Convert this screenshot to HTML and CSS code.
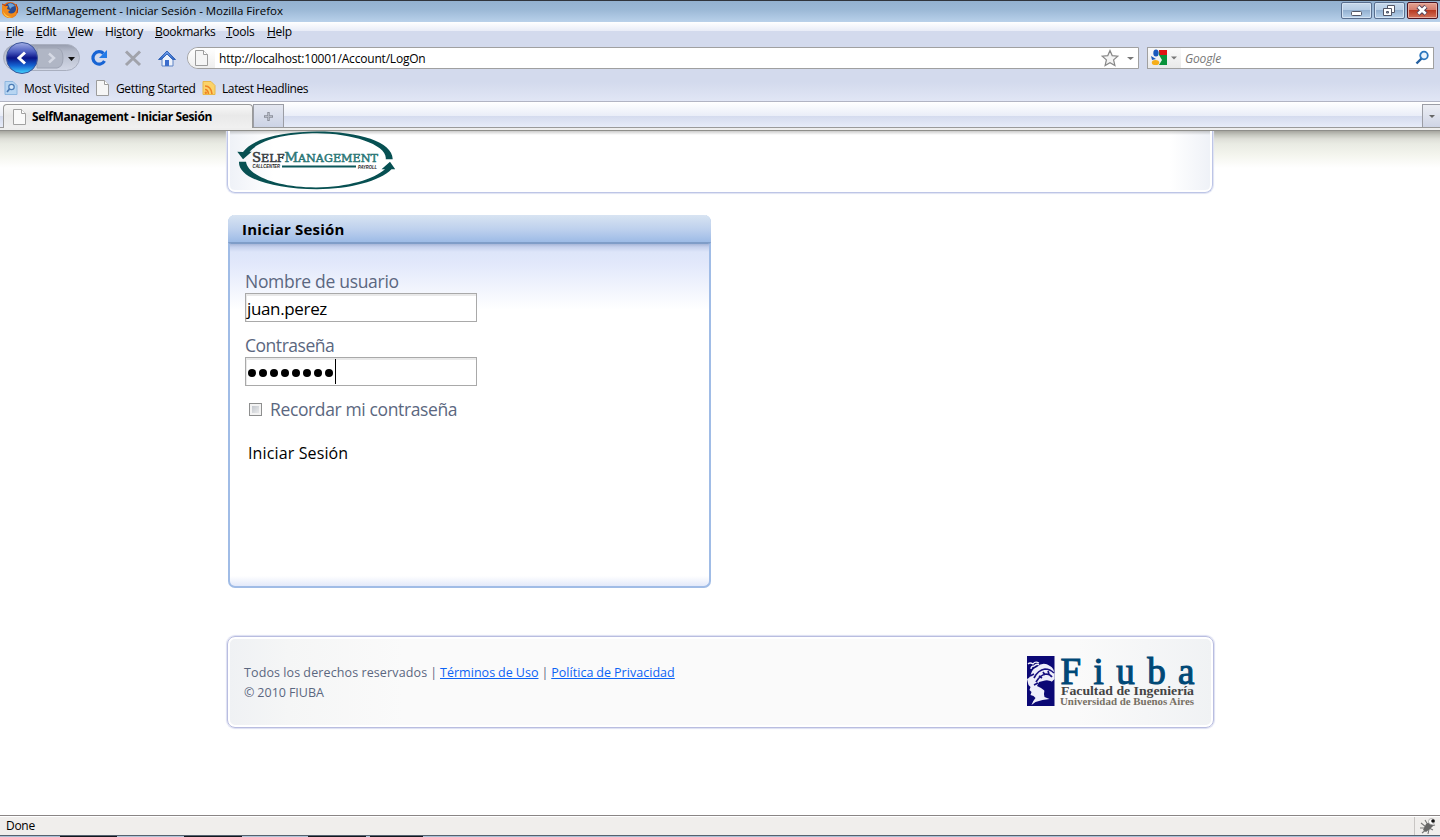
FILE: index.html
```html
<!DOCTYPE html>
<html lang="es">
<head>
<meta charset="utf-8">
<title>SelfManagement - Iniciar Sesión</title>
<link rel="stylesheet" href="styles.css">
</head>
<body>
<div class="window">
  <div class="titlebar">
    <svg class="fox" width="18" height="18" viewBox="0 0 18 18"><circle cx="9" cy="9" r="8" fill="#e56a12"/><circle cx="9.500" cy="7.500" r="5.800" fill="#2b4c93"/><path d="M7 3q4-2 7 2l-3 1-2 2z" fill="#6ba2d8"/><path d="M1 4l3 1 3 0-1 3 3 1-2 2q3 3 7 0 2-3 0-8 4 4 2 8-2 6-8 6-8-1-7-9z" fill="#ef8a1c"/><path d="M2 10q3 6 9 6-7 2-9-6" fill="#ffd44f"/><path d="M1 3l4 2M15 3q3 5 1 9" stroke="#b8390b" fill="none"/></svg>
    <span class="window-title">SelfManagement - Iniciar Sesión - Mozilla Firefox</span>
    <div class="window-buttons">
      <span class="winbtn"><svg width="30" height="17"><rect x="10.500" y="9.500" width="10" height="4" rx="1" fill="#fff" stroke="#535666"/></svg></span>
      <span class="winbtn"><svg width="30" height="17"><path d="M13.500 3.500h7v7h-7z" fill="#fff" stroke="#535666"/><path d="M9.500 6.500h8v7h-8z" fill="#fff" stroke="#535666"/><path d="M12.500 9.500h2v1.500h-2z" fill="#8eadd0" stroke="#535666"/></svg></span>
      <span class="winbtn close"><svg width="30" height="17"><path d="M11 4.500l8 7.500M19 4.500L11 12" stroke="#53435a" stroke-width="4.500"/><path d="M11.300 4.800l7.400 7M18.700 4.800l-7.400 7" stroke="#fff" stroke-width="2.600"/></svg></span>
    </div>
  </div>

  <div class="chrome">
    <nav class="menu">
      <span class="m-file"><u>F</u>ile</span><span class="m-edit"><u>E</u>dit</span><span class="m-view"><u>V</u>iew</span><span class="m-history">Hi<u>s</u>tory</span><span class="m-bookmarks"><u>B</u>ookmarks</span><span class="m-tools"><u>T</u>ools</span><span class="m-help"><u>H</u>elp</span>
    </nav>
    <div class="navbar">
      <svg class="nav-icons" width="187" height="34" viewBox="0 42 187 34">
        <defs>
          <linearGradient id="pill" x2="0" y2="1"><stop stop-color="#969cad"/><stop offset=".25" stop-color="#b3b9c9"/><stop offset="1" stop-color="#d3d8e6"/></linearGradient>
          <linearGradient id="back" x2="0" y2="1"><stop stop-color="#a4b0e6"/><stop offset=".3" stop-color="#4a5cc0"/><stop offset=".5" stop-color="#0a1488"/><stop offset=".75" stop-color="#1464d2"/><stop offset="1" stop-color="#44d8ff"/></linearGradient>
          <linearGradient id="roof" x2="0" y2="1"><stop stop-color="#79a5ee"/><stop offset="1" stop-color="#2c62c4"/></linearGradient>
        </defs>
        <rect x="3.500" y="44.500" width="76" height="26" rx="13" fill="url(#pill)" stroke="#a9afbf"/>
        <path d="M37 48h20q6 1 6 10t-6 10H37z" fill="#b0b6c5" stroke="#9ea4b4"/>
        <circle cx="22" cy="58" r="15.500" fill="url(#back)" stroke="#3a5499"/>
        <path d="M25 52.500L19 58l6 5.500" fill="none" stroke="#fff" stroke-width="3"/>
        <path d="M49 53.500l5 4.500-5 4.500" fill="none" stroke="#d6dae5" stroke-width="2.400"/>
        <path d="M68 57h7l-3.500 4z" fill="#111"/>
        <path d="M103.500 53.500A6.200 6.200 0 1 0 104.500 61" fill="none" stroke="#1764d4" stroke-width="3.200"/>
        <path d="M107 50v8h-8z" fill="#237be8"/>
        <path d="M126 51.500l14 13.500M140 51.500l-14 13.500" stroke="#a1a3ab" stroke-width="3"/>
        <path d="M162 58v8h11v-8l-5.500-5z" fill="#edf2fb" stroke="#5d83c5"/><path d="M158.500 59.500l8.500-8.500 8.500 8.500h-3L167 54l-5.500 5.500z" fill="url(#roof)" stroke="#3566b8"/><path d="M165 60h4v6h-4z" fill="#3c6dcc"/>
      </svg>
      <div class="url">
        <span class="url-site"><svg width="14" height="16"><path d="M.5.5h8l4 4v11H.5z" fill="#f5f5f5" stroke="#9c9c9c"/><path d="M8.500.5v4h4" fill="#fff" stroke="#9c9c9c"/></svg></span>
        <span class="url-text">http://localhost:10001/Account/LogOn</span>
        <svg class="star" width="34" height="18"><path d="M10 1.500l2.200 5.100 5.600.6-4.200 3.700 1.300 5.600L10 13.700 5.100 16.500l1.300-5.600L2.200 7.200l5.600-.6z" fill="#f4f4f4" stroke="#888" stroke-width="1.200"/><path d="M27 8h7L30.500 11z" fill="#777"/></svg>
      </div>
      <div class="search">
        <span class="engine"><svg width="32" height="19"><path d="M9 2h8v15h-8l3-5-3-5z" fill="#08923a"/><path d="M9 2h8v5h-7z" fill="#e01313"/><ellipse cx="6" cy="5" rx="2.700" ry="3.500" fill="#1859bd"/><path d="M1 8l5 3-4 1z" fill="#1859bd"/><ellipse cx="5.500" cy="14.500" rx="3.700" ry="2.600" fill="#f6ae19"/><path d="M21 8.500h6l-3 3z" fill="#777"/></svg></span>
        <span class="search-text">Google</span>
        <svg width="16" height="16"><path d="M2.500 13.500l5-5" stroke="#245f9f" stroke-width="2.400"/><circle cx="10" cy="5.500" r="3.800" fill="#e9f3fd" stroke="#2b76bd" stroke-width="1.800"/></svg>
      </div>
    </div>
    <div class="bookmarks">
      <svg width="14" height="16"><path d="M1 1.500h8l4 4v9H1z" fill="#b7d5f2" stroke="#8db6df"/><circle cx="7.500" cy="7" r="2.700" fill="#d9eafa" stroke="#4a7ab5" stroke-width="1.200"/><path d="M5.500 9L3 12" stroke="#4a7ab5" stroke-width="1.700"/></svg><span class="b-most">Most Visited</span>
      <svg width="14" height="16"><path d="M.5.5h8l4 4v11H.5z" fill="#f6f6f6" stroke="#9c9c9c"/><path d="M8.500.5v4h4" fill="#fff" stroke="#9c9c9c"/></svg><span class="b-start">Getting Started</span>
      <svg width="14" height="16"><path d="M1 1.500h8l4 4v9H1z" fill="#fbd36a" stroke="#e8b748"/><path d="M3 6q6 0 7 8M3 9.500q3 0 3.500 4.500" stroke="#ee8424" stroke-width="1.600" fill="none"/><circle cx="3.800" cy="12.800" r="1.200" fill="#ee8424"/></svg><span class="b-latest">Latest Headlines</span>
    </div>
  </div>

  <div class="tabs">
    <div class="tab"><svg width="14" height="16"><path d="M1.500.5h8l4 4v11h-12z" fill="#fafafa" stroke="#a2a2a2"/><path d="M9.500.5v4h4" fill="#fff" stroke="#a2a2a2"/></svg><span>SelfManagement - Iniciar Sesión</span></div>
    <div class="newtab"><svg width="11" height="11"><path d="M5.500 1v9M1 5.500h9" stroke="#8b8f9a" stroke-width="2.400"/><path d="M5.500 2v7M2 5.500h7" stroke="#b5b9c4"/></svg></div>
    <div class="alltabs"><svg width="8" height="5"><path d="M1 1h6L4 4z" fill="#666"/></svg></div>
  </div>
  <div class="tab-edge"></div>

  <main class="page">
    <header class="site-header">
      <svg width="162" height="62" viewBox="235 131 162 62">
        <path d="M243 152C254 137 287 131.500 317 131.500C359 131.500 393 142 392.700 159.300H385.700C388 145 352 133.300 317 133.300C287 133.300 260 139.500 249.500 151.700H251.700L243 159.200L237.300 151.700Z" fill="#075052"/>
        <path d="M239 161.700H246C248 176 278 187.400 316 187.400C348 187.400 374 179 385 169.300H381.500L390 161.700L395.200 169.300H391.500C380 181 350 189.200 317 189.200C272 189.200 238 178 239 161.700Z" fill="#075052"/>
        <text class="logo-word" x="252" y="162" textLength="126" lengthAdjust="spacingAndGlyphs"><tspan class="logo-big dark">S</tspan><tspan class="dark">ELF</tspan><tspan class="logo-big">M</tspan>ANAGEMENT</text>
        <text class="logo-small" x="252.500" y="168.300" textLength="27.500" lengthAdjust="spacingAndGlyphs">CALLCENTER</text>
        <path d="M282 166.500h74" stroke="#0c5759" stroke-width="2"/>
        <text class="logo-small" x="358" y="168.700" textLength="19" lengthAdjust="spacingAndGlyphs">PAYROLL</text>
      </svg>
    </header>

    <section class="login">
      <h1><span>Iniciar Sesión</span></h1>
      <form class="login-form">
        <label class="l-user">Nombre de usuario</label>
        <div class="field"><span class="user-value">juan.perez</span></div>
        <label class="l-pass">Contraseña</label>
        <div class="field"><span class="dots"><i></i><i></i><i></i><i></i><i></i><i></i><i></i><i></i></span><span class="caret"></span></div>
        <div class="remember"><span class="check"></span><span class="l-rem">Recordar mi contraseña</span></div>
        <div class="submit"><span>Iniciar Sesión</span></div>
      </form>
    </section>

    <footer class="site-footer">
      <div class="legal"><p><span class="rights">Todos los derechos reservados</span> | <a class="terms">Términos de Uso</a> | <a class="privacy">Política de Privacidad</a></p><p class="copy">© 2010 FIUBA</p></div>
      <svg class="fiuba-logo" width="172" height="54" viewBox="1026 654 172 54">
        <path d="M1027 656h27.500v50H1027z" fill="#0b0875"/>
        <path d="M1027 679q3-1 4-5 1-5 6-7 6-6 13-1 4 2 4.500 8v5l-3 3q2 4 2 6l-1 4-4-1-4-1q-1 4 0 7l5 2-7 1-7 2-4 3q2-5 4-7l-2-2-3-1 1-3-2-2 1-3-2-2z" fill="#eeeefa"/>
        <path d="M1028 664q2-2 5 0 2-3 6-1M1031 669q0-3 3-3 3-3 5-1" stroke="#eeeefa" stroke-width="1.300" fill="none"/>
        <path d="M1034 678q4-8 11-9 5 0 9 4M1036 682q4-7 10-8 4 0 6 3M1039 676l3 2M1043 672l2 3M1048 671l1 3M1030 676l4-2M1034 685l4-2" stroke="#171080" stroke-width="1.700" fill="none"/>
        <path d="M1043 681q6-2 11 2v16l-6-2-3-6-4-3-4-2 2-4z" fill="#0b0875"/>
        <text class="fiuba" x="1060.500" y="683.500" textLength="134">Fiuba</text>
        <text class="faculty" x="1061" y="695" textLength="133" lengthAdjust="spacingAndGlyphs">Facultad de Ingeniería</text>
        <text class="university" x="1060" y="704.500" textLength="134" lengthAdjust="spacingAndGlyphs">Universidad de Buenos Aires</text>
      </svg>
    </footer>
  </main>

  <div class="status"><span class="done">Done</span>
    <div class="bug"><svg width="18" height="18"><path d="M2 6l5 4M6 3l3 5M1 11l6 0M3 16l5-4M9 17l1-5M14 13l-4-2M16 8l-4 1" stroke="#777" stroke-width="1.100"/><path d="M4 13l3-6 4-2 3 4-3 3-4 3z" fill="#666"/><circle cx="12.500" cy="4.500" r="3" fill="#fff" stroke="#999" stroke-width=".7"/><circle cx="14" cy="4" r="1.800" fill="#111"/></svg></div>
  </div>
  <div class="taskbar"></div>
</div>
</body>
</html>
```
FILE: styles.css
```css
* { box-sizing: border-box; }
body { margin: 0; background: #fff; font-family: "Open Sans", "Noto Sans", sans-serif; font-size: 12px; color: #000; overflow: hidden; }
svg { display: block; flex: none; }
span, a, label { white-space: nowrap; }
.window { width: 1440px; height: 837px; display: flex; flex-direction: column; }
.window > * { flex: none; }

.titlebar { height: 22px; display: flex; border-top: 1px solid #30343c; background: linear-gradient(#93b1d0, #9bb8d6 40%, #b9d1ea); padding-left: 1px; }
.window-title { margin-left: 7px; line-height: 20px; font-size: 11.5px; letter-spacing: -.03px; }
.window-buttons { margin: 1px 2px 0 auto; display: flex; gap: 2px; }
.winbtn { width: 31px; height: 17px; border: 1px solid #596e8e; border-radius: 2px; background: linear-gradient(#c7d9ec, #b5cce5 48%, #93b0d0 50%, #b9d3ec); box-shadow: inset 0 0 0 1px #d4e3f3; overflow: hidden; }
.winbtn svg { margin: -1px; }
.close { border-color: #4d1420; background: linear-gradient(#e3a392, #d3796a 48%, #b83a22 50%, #d3735b); box-shadow: inset 0 0 0 1px #e8aea2; }

.chrome { height: 80px; background: linear-gradient(#fff, #e8ecf7 9px, #d3daed 9px, #d3daed 60px, #e1e6f5); border-bottom: 1px solid #b1b4c3; display: flex; flex-direction: column; }
.menu { height: 20px; padding-left: 6px; display: flex; line-height: 20px; letter-spacing: -.3px; }
.menu span { flex: none; }
.menu u { text-underline-offset: 1px; }
.m-file { width: 30px; }
.m-edit { width: 32px; }
.m-view { width: 37px; }
.m-history { width: 50px; }
.m-bookmarks { width: 71px; }
.m-tools { width: 41px; }
.navbar { height: 33px; display: flex; align-items: flex-start; }
.url { width: 952px; height: 22px; margin-top: 5px; border: 1px solid #a0a0a0; border-radius: 11px 0 0 11px; background: #fff; display: flex; align-items: center; }
.url-site { width: 27px; height: 20px; padding: 2px 0 0 7px; border-radius: 10px 0 0 10px; background: linear-gradient(#fff, #eee); }
.url-text { margin-left: 4px; letter-spacing: -.2px; }
.star { margin-left: auto; margin-right: 4px; }
.search { width: 287px; height: 22px; margin: 5px 0 0 8px; border: 1px solid #a0a0a0; background: #fff; display: flex; align-items: center; padding-right: 3px; }
.engine { width: 33px; height: 20px; padding-left: 2px; background: linear-gradient(#fafafa, #e9e9e9); }
.search-text { margin-left: 4px; margin-right: auto; font-style: italic; color: #777; letter-spacing: -.15px; }
.bookmarks { height: 26px; padding: 0 0 0 4px; display: flex; align-items: center; }
.bookmarks span { flex: none; line-height: 24px; padding-top: 2px; }
.b-most { width: 72px; margin-left: 6px; letter-spacing: -.25px; }
.b-start { width: 86px; margin-left: 6px; letter-spacing: -.35px; }
.b-latest { margin-left: 6px; letter-spacing: -.4px; }

.tabs { height: 26px; display: flex; align-items: flex-end; background: linear-gradient(#fff, #e9edf8 14px, #d4dbee 14px, #e7ecf9); border-bottom: 1px solid #9a9a9a; }
.tab { width: 250px; height: 24px; margin: 0 0 -1px 3px; border: 1px solid #9a9a9a; border-bottom: 0; border-radius: 4px 4px 0 0; background: linear-gradient(#f8f8f8, #e9e9e9 45%, #f0f0f0); display: flex; align-items: center; padding-left: 8px; font-weight: bold; letter-spacing: -.37px; }
.tab span { margin-left: 6px; }
.newtab { width: 31px; height: 23px; border: 1px solid #9b9da5; border-bottom: 0; background: linear-gradient(#e4e7f0, #ccd3e5); display: flex; align-items: center; justify-content: center; }
.alltabs { margin-left: auto; width: 18px; height: 23px; border: 1px solid #9b9da5; border-width: 1px 0 0 1px; background: linear-gradient(#eceef4, #cfd5e6); display: flex; align-items: center; justify-content: center; }
.tab-edge { height: 3px; background: #eee; border-bottom: 1px solid #8e8e8a; }

.page { height: 684px; background: linear-gradient(#a6a69f, #c6c8c0 4px, #dedfd8 8px, #e9ebe3 13px, #f4f5ee 24px, #fff 37px); padding-left: 227px; }
.site-header { width: 986px; height: 62px; padding-left: 7px; border: 1px solid #bdc5e6; border-top: 0; border-radius: 0 0 8px 8px; background: linear-gradient(#0003, #0000 4px), linear-gradient(90deg, #eef1f7, #fff 45px, #fff 942px, #eef1f7); box-shadow: inset 0 -2px #fff, inset 2px 0 #fff, inset -2px 0 #fff, 0 0 1px 1px #dfe3f3; clip-path: inset(0 -3px -3px -3px); }
.logo-word { font: 11px "DejaVu Serif", serif; fill: #2b7776; stroke: #2b7776; stroke-width: .5px; }
.logo-big { font-size: 13px; }
.dark { fill: #363b40; stroke: #363b40; }
.logo-small { font: italic bold 5px "Liberation Sans", sans-serif; fill: #222; }

.login { width: 483px; height: 373px; margin: 22px 0 0 1px; border: 2px solid #a0bce6; border-top: 0; border-radius: 7px; background: linear-gradient(0deg, #e3e9fa, #fff 10px); display: flex; flex-direction: column; }
.login h1 { flex: none; margin: 0 -2px; height: 29px; padding-left: 14px; font-size: 15px; line-height: 29px; letter-spacing: .2px; border-radius: 7px 7px 3px 3px; background: linear-gradient(#d8e4f2, #bdd0ed 50%, #9dbbe6 27px, #7f9dc8 27px); }
.login h1 span { display: inline-block; }
.login-form { display: flex; flex-direction: column; padding: 25px 0 0 15px; height: 332px; background: linear-gradient(#a7b6d8, #c6d1ed 3px, #dde5f9 8px, #e2e8fb 20px, #fff 66px, #fff0 67px); font-size: 17.500px; }
.login-form label, .l-rem { color: #5b6780; line-height: 24px; height: 24px; letter-spacing: -.3px; }
.login-form .l-pass { letter-spacing: -.47px; }
.field { width: 232px; height: 29px; margin-bottom: 11px; border: 1px solid #a9a9a9; background: #fff; box-shadow: inset 1px 2px #e9e9e9; display: flex; align-items: center; padding-left: 1px; font-size: 17px; }
.field .user-value { line-height: 28px; padding-top: 3px; letter-spacing: -.35px; }
.dots { display: flex; gap: 3px; padding: 3px 0 0 1px; }
.dots i { width: 8px; height: 8px; border-radius: 50%; background: #000; }
.caret { width: 1px; height: 25px; background: #000; margin-left: 2px; }
.remember { display: flex; align-items: center; height: 24px; }
.check { width: 13px; height: 13px; margin-left: 4px; border: 1px solid #8e8f8f; background: linear-gradient(135deg, #b8bdc5, #f3f3f3); box-shadow: inset 0 0 0 2px #f3f3f3; }
.login-form .l-rem { margin-left: 8px; letter-spacing: -.37px; color: #5b6780; }
.submit { margin: 20px 0 0 3px; line-height: 24px; font-size: 16px; letter-spacing: .13px; }

.site-footer { width: 987px; height: 92px; margin-top: 48px; border: 1px solid #b9bde0; border-radius: 8px; background: linear-gradient(90deg, #eff1f4, #f5f6f6 60px, #fafafa 175px, #fafafa 850px, #f0f2f4); box-shadow: inset 0 0 0 2px #fff, 0 0 1px 1px #dcdff2; display: flex; justify-content: space-between; padding: 17px 15px 0 16px; }
.legal { padding-top: 9px; color: #5b6780; font-size: 12.500px; }
.legal p { margin: 0; line-height: 20px; white-space: nowrap; word-spacing: -.3px; }
.rights { letter-spacing: .13px; }
.legal a { color: #0c63f5; text-decoration: underline; letter-spacing: .03px; }
.fiuba-logo { overflow: visible; }
.fiuba { font: 37px "Liberation Serif", serif; fill: #004876; stroke: #004876; stroke-width: 1.1px; }
.faculty { font: bold 11.5px "Liberation Serif", serif; fill: #444; }
.university { font: bold 9.5px "Liberation Serif", serif; fill: #777064; }

.status { height: 20px; border-top: 1px solid #8a8585; background: #f0eeec; display: flex; box-shadow: inset 0 1px #fff; }
.done { padding-left: 6px; line-height: 19px; letter-spacing: -.3px; }
.bug { margin: 1px 0 0 auto; width: 26px; padding-left: 4px; border-left: 1px solid #c9c6c4; }
.taskbar { height: 2px; border-top: 1px solid #56616e; background: linear-gradient(90deg, #a9bfd5 60px, #131820 60px 117px, #b1c4d8 117px 184px, #131820 184px 242px, #b1c4d8 242px 308px, #131820 308px 366px, #b1c4d8 366px 370px, #131820 370px 423px, #a9bfd5 423px); }
```
